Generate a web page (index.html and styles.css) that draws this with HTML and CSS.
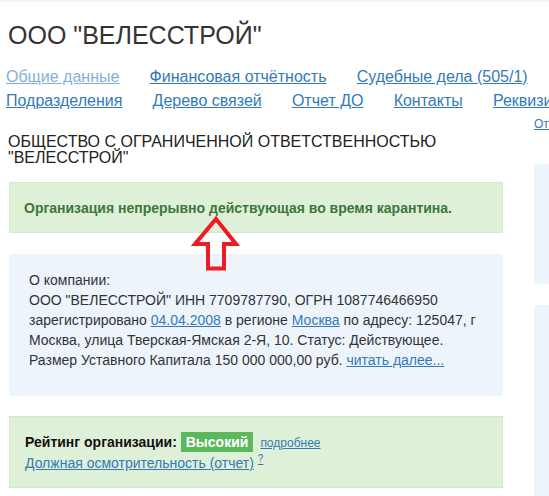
FILE: index.html
```html
<!DOCTYPE html>
<html lang="ru">
<head>
<meta charset="utf-8">
<title>ООО "ВЕЛЕССТРОЙ"</title>
<link rel="stylesheet" href="styles.css">
</head>
<body>
<div class="topbar"></div>
<div class="page">
  <h1 class="title">ООО "ВЕЛЕССТРОЙ"</h1>
  <nav class="tabs">
    <a class="tab tab-active" href="#">Общие данные</a>
    <a class="tab" href="#">Финансовая отчётность</a>
    <a class="tab" href="#">Судебные дела (505/1)</a>
    <a class="tab" href="#">Подразделения</a>
    <a class="tab" href="#">Дерево связей</a>
    <a class="tab" href="#">Отчет ДО</a>
    <a class="tab" href="#">Контакты</a>
    <a class="tab" href="#">Реквизиты</a>
  </nav>
  <div class="columns">
    <main class="main">
      <h2 class="fullname">ОБЩЕСТВО С ОГРАНИЧЕННОЙ ОТВЕТСТВЕННОСТЬЮ "ВЕЛЕССТРОЙ"</h2>
      <div class="alert">Организация непрерывно действующая во время карантина.</div>
      <div class="about">
        <div>О компании:</div>
        <div>ООО "ВЕЛЕССТРОЙ" ИНН 7709787790, ОГРН 1087746466950 зарегистрировано <a href="#">04.04.2008</a> в регионе <a href="#">Москва</a> по адресу: 125047, г Москва, улица Тверская-Ямская 2-Я, 10. Статус: Действующее. Размер Уставного Капитала 150 000 000,00 руб. <a href="#">читать далее...</a></div>
      </div>
      <div class="rating">
        <div><b class="rating-label">Рейтинг организации:</b> <span class="badge">Высокий</span><a class="more" href="#">подробнее</a></div>
        <div><a href="#">Должная осмотрительность (отчет)</a> <sup><a href="#">?</a></sup></div>
      </div>
    </main>
    <aside class="side">
      <a class="side-link" href="#">Отчет</a>
      <div class="side-box side-box-top"></div>
      <div class="side-box side-box-bottom"></div>
    </aside>
  </div>
  <svg class="arrow" width="56" height="64" viewBox="0 0 56 64">
    <polygon points="28,7 48,32 36,32 36,56.5 20,56.5 20,32 7,32" fill="none" stroke="#ed1c24" stroke-width="4" stroke-linejoin="miter" stroke-miterlimit="10"/>
  </svg>
</div>
</body>
</html>
```

FILE: styles.css
```css
html, body {
  margin: 0;
  padding: 0;
  overflow: hidden;
  background: #fff;
}
body {
  font-family: "Liberation Sans", Arial, sans-serif;
  font-size: 14px;
  line-height: 20px;
  color: #333;
}
a {
  color: #337ab7;
  text-decoration: underline;
}
.topbar {
  height: 2px;
  background: #f3f3f3;
}
.page {
  position: relative;
  display: flow-root;
  width: 900px;
}
.title {
  margin: 19px 0 0 8px;
  font-size: 25px;
  line-height: 28px;
  font-weight: normal;
  color: #333;
}
.tabs {
  margin: 16px 0 0 6px;
  width: 620px;
  display: flex;
  flex-wrap: wrap;
  column-gap: 30.2px;
  font-size: 16px;
  line-height: 24px;
}
.tab-active {
  color: #85afdb;
}
.columns {
  display: flex;
  gap: 31px;
  padding-left: 9px;
}
.main {
  width: 494px;
  flex: none;
}
.fullname {
  margin: 21.3px 0 0 -1px;
  font-size: 16px;
  line-height: 16px;
  font-weight: normal;
  color: #222;
}
.alert {
  margin-top: 16px;
  padding: 15px 15px 14px 14px;
  background: #dff0d8;
  border: 1px solid #d6e9c6;
  color: #3c763d;
  font-weight: bold;
}
.about {
  margin-top: 21px;
  padding: 16px 20px 26px 20px;
  background: #edf4fc;
  border-radius: 4px;
  color: #333;
}
.rating {
  margin-top: 20px;
  padding: 15px 15px 14px;
  background: #dff0d8;
  border: 1px solid #d6e9c6;
  color: #333;
}
.rating-label {
  color: #111;
}
.badge {
  display: inline-block;
  padding: 0 5px;
  background: #5cb85c;
  color: #fff;
  font-weight: bold;
  line-height: 20px;
  vertical-align: top;
}
.more {
  margin-left: 7px;
  font-size: 12px;
}
.rating sup {
  font-size: 10px;
  line-height: 0;
}
.side {
  width: 260px;
  flex: none;
  padding-top: 2.6px;
}
.side-link {
  display: block;
  font-size: 12px;
  line-height: 16px;
}
.side-box {
  background: #eef4fb;
  border-radius: 4px;
}
.side-box-top {
  margin-top: 32px;
  height: 120px;
}
.side-box-bottom {
  margin-top: 21px;
  height: 400px;
}
.arrow {
  position: absolute;
  left: 188px;
  top: 210px;
}
```
